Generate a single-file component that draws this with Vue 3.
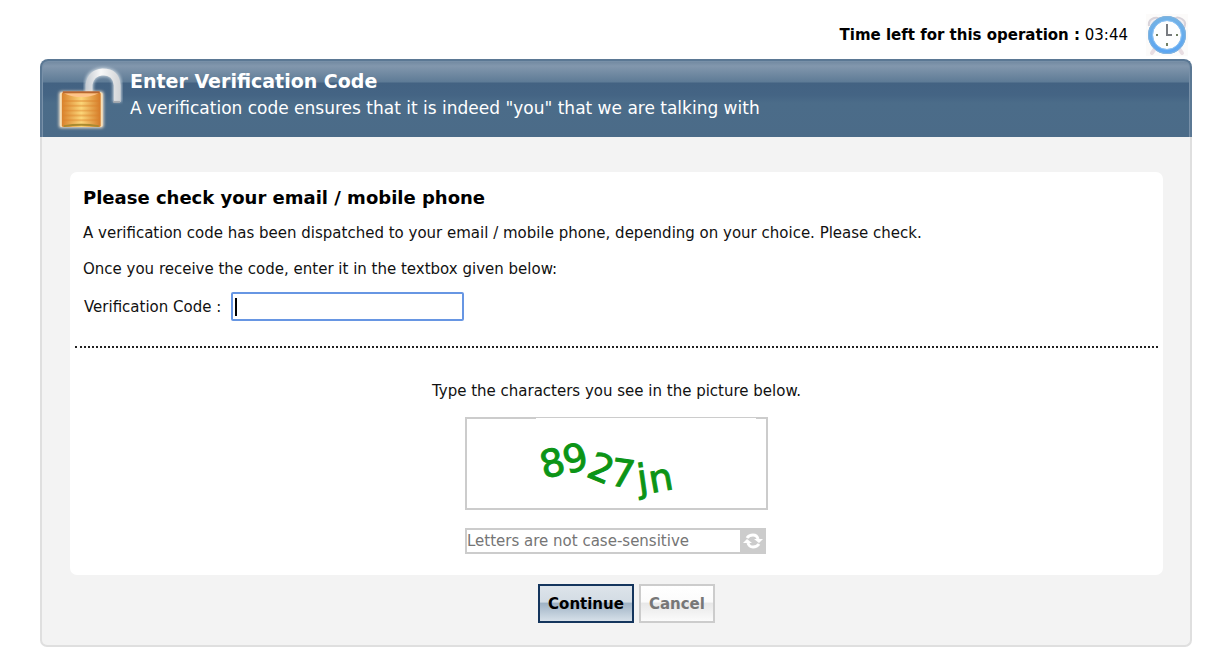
<script setup>
import { ref, onMounted } from 'vue'

const code = ref('')
const captcha = ref('')
const timeLeft = ref('03:44')
const codeInput = ref(null)

onMounted(() => codeInput.value.focus())
</script>

<template>
  <div class="page">
    <div class="timer">
      <span><strong>Time left for this operation :</strong> {{ timeLeft }}</span>
      <svg class="clock" viewBox="0 0 42 42" aria-hidden="true">
        <defs>
          <linearGradient id="rim" x1="0" y1="0" x2="0" y2="1">
            <stop offset="0" stop-color="#72b2e6" />
            <stop offset="1" stop-color="#5ca6f2" />
          </linearGradient>
        </defs>
        <rect width="42" height="42" fill="#fcfbfa" />
        <path d="M3 12Q2 6 8 4Q12 3 14 5M28 5Q31 2 36 5Q41 8 38 14" fill="#f1eef1" stroke="#d8d3da" stroke-width="2" />
        <path d="M8 36l-2 3M34 36l2 3" stroke="#e8dde2" stroke-width="4" stroke-linecap="round" />
        <circle cx="21" cy="21" r="16.500" fill="#fdfefe" stroke="url(#rim)" stroke-width="5" />
        <circle cx="21" cy="21" r="18.500" fill="none" stroke="#84b4dc" stroke-width="1" />
        <circle cx="21" cy="21" r="14.500" fill="none" stroke="#8fc4f4" stroke-width="1" />
        <path d="M21 10V21H26" fill="none" stroke="#777b80" stroke-width="2" />
        <path d="M21 29v3M10 21h2M30 21h2" stroke="#708064" stroke-width="2" />
      </svg>
    </div>

    <main class="card">
      <header class="banner">
        <svg class="lock" viewBox="0 0 70 68" aria-hidden="true">
          <defs>
            <linearGradient id="body" x1="0" x2="1">
              <stop offset="0" stop-color="#d9812c" />
              <stop offset="0.500" stop-color="#fbd578" />
              <stop offset="1" stop-color="#d47a28" />
            </linearGradient>
            <linearGradient id="steel" gradientUnits="userSpaceOnUse" x1="30" y1="0" x2="66" y2="0">
              <stop offset="0" stop-color="#c3c9d0" />
              <stop offset="0.450" stop-color="#f8f8f8" />
              <stop offset="1" stop-color="#d2d4d7" />
            </linearGradient>
            <filter id="glow" x="-20%" y="-20%" width="140%" height="140%">
              <feGaussianBlur stdDeviation="1.500" />
            </filter>
          </defs>
          <path d="M34 29V20Q35 8 48 7Q63 7 63 21V38" fill="none" stroke="#c4d0da" stroke-width="9" filter="url(#glow)" />
          <path d="M34 29V20Q36 8 48 7Q62 7 63 21V38" fill="none" stroke="url(#steel)" stroke-width="7" />
          <path d="M59 38h7" fill="none" stroke="#a7abb0" stroke-width="2" />
          <rect x="3" y="27" width="46" height="38" rx="3" fill="#efe2cf" filter="url(#glow)" />
          <rect x="4" y="28" width="44" height="36" rx="2" fill="#f7dfb6" />
          <rect x="6" y="28" width="40" height="36" rx="2" fill="url(#body)" />
          <path d="M7 37h38M7 42h38M7 47h38M7 52h38M7 57h38" stroke="#dc8129" stroke-width="2" opacity="0.400" />
          <path d="M8 29Q26 37 44 29Z" fill="#ffc489" />
          <path d="M7 28h38" stroke="#b86731" stroke-width="2" />
          <path d="M8 63Q26 60 44 63" fill="none" stroke="#a98a30" stroke-width="2" />
        </svg>
        <div class="heading">
          <h1>Enter Verification Code</h1>
          <p>A verification code ensures that it is indeed "you" that we are talking with</p>
        </div>
      </header>

      <form class="content" @submit.prevent>
        <section class="panel">
          <h2>Please check your email / mobile phone</h2>
          <p>A verification code has been dispatched to your email / mobile phone, depending on your choice. Please check.</p>
          <p>Once you receive the code, enter it in the textbox given below:</p>
          <div class="field">
            <label for="code">Verification Code :</label>
            <input id="code" ref="codeInput" v-model="code" type="text" placeholder=" " autocomplete="off" />
          </div>
          <hr />
          <div class="check">
            <label for="captcha">Type the characters you see in the picture below.</label>
            <div class="picture">
              <svg viewBox="0 0 220 88" role="img" aria-label="Characters to type">
                <rect width="220" height="88" fill="#fff" />
                <text x="8 31 49 73 103 115" y="61 56 58 67 74 75" rotate="-15 -15 22 8 -8 -10">8927jn</text>
              </svg>
            </div>
            <div class="entry">
              <input id="captcha" v-model="captcha" type="text" placeholder="Letters are not case-sensitive" autocomplete="off" />
              <button type="button" aria-label="Refresh picture">
                <svg viewBox="0 0 20 18" aria-hidden="true">
                  <path d="M4 6Q6 3 10 3Q14 3 15 7M16 12Q14 15 10 15Q6 15 5 11" fill="none" stroke="#fff" stroke-width="3" />
                  <path d="M11 7h9l-4 4zM0 11l4-4 5 4z" fill="#fff" />
                </svg>
              </button>
            </div>
          </div>
        </section>
        <div class="actions">
          <button class="primary" type="submit">Continue</button>
          <button class="secondary" type="button">Cancel</button>
        </div>
      </form>
    </main>
  </div>
</template>

<style>
body {
  margin: 0;
  background: #fff;
}
</style>

<style scoped>
.page {
  padding: 12px 19px 16px 40px;
  font-family: Verdana, "DejaVu Sans", sans-serif;
  font-size: 15px;
  line-height: 20px;
  color: #111;
}

.page * {
  box-sizing: border-box;
}

h1,
h2,
p {
  margin: 0;
}

input,
button {
  font: inherit;
}

.timer {
  display: flex;
  justify-content: flex-end;
  align-items: center;
  gap: 18px;
  height: 47px;
  padding: 0 4px 2px 0;
  color: #000;
}

.clock {
  width: 42px;
  height: 42px;
}

.banner {
  display: flex;
  gap: 6px;
  height: 78px;
  padding: 4px 14px;
  border: solid #5b7894;
  border-width: 2px 2px 0;
  border-radius: 8px 8px 0 0;
  box-shadow: inset 1px 1px 0 #7890a8, inset -1px 0 0 #7890a8;
  background: linear-gradient(#7088a0 0, #8297ad 5px, #5e7b96 21px, #436282 22px, #446484 34px, #4b6c89 42px, #4b6b88 100%);
  color: #fff;
}

.lock {
  flex: none;
  width: 68px;
  height: 66px;
}

.heading {
  padding-top: 4px;
}

.heading h1 {
  font-size: 19px;
  line-height: 24px;
}

.heading p {
  padding-top: 4px;
  font-size: 17px;
  line-height: 22px;
}

.content {
  padding: 35px 27px 22px 28px;
  border: 2px solid #dfdfdf;
  border-top: 0;
  border-radius: 0 0 7px 7px;
  background: #f3f3f3;
}

.panel {
  padding: 14px 5px 21px;
  border-radius: 7px;
  background: #fff;
}

.panel h2 {
  padding-left: 8px;
  font-size: 18px;
  line-height: 24px;
  color: #000;
}

.panel > p {
  padding: 13px 8px 3px;
}

.field {
  display: flex;
  align-items: center;
  gap: 10px;
  padding: 10px 9px 0;
}

.field input {
  width: 233px;
  height: 29px;
  padding: 2px 3px;
  border: 2px solid #6796e3;
  border-radius: 2px;
  outline: none;
  background: #fff;
}

/* Steady, thick caret while the focused box is empty */
.field input:focus:placeholder-shown {
  caret-color: transparent;
  background: linear-gradient(#000, #000) 2px center / 2px 18px no-repeat #fff;
}

hr {
  margin: 25px 0 0;
  border: 0;
  border-top: 2px dotted #222;
}

.check {
  display: flex;
  flex-direction: column;
  align-items: center;
  padding-top: 33px;
}

.picture {
  width: 303px;
  height: 93px;
  margin-top: 16px;
  border: 2px solid #ccc;
}

.picture svg {
  display: block;
  width: 220px;
  height: 88px;
  margin: -1px 0 0 69px;
  overflow: visible;
}

.picture text {
  font-family: Verdana, "DejaVu Sans", sans-serif;
  font-size: 38px;
  fill: #0c9416;
  stroke: #0c9416;
  stroke-width: 1px;
}

.entry {
  display: flex;
  width: 301px;
  height: 26px;
  margin: 18px 2px 0 0;
}

.entry input {
  flex: 1;
  min-width: 0;
  padding: 0;
  border: 2px solid #ccc;
  border-right: 0;
  outline: none;
  background: #fff;
}

.entry input::placeholder {
  color: #757575;
  opacity: 1;
}

.entry button {
  display: flex;
  justify-content: center;
  align-items: center;
  width: 26px;
  padding: 0;
  border: 0;
  background: #ccc;
}

.entry button svg {
  width: 20px;
  height: 18px;
}

.actions {
  display: flex;
  justify-content: center;
  gap: 5px;
  padding: 9px 0 0 20px;
}

.actions button {
  height: 39px;
  padding: 1px 8px 0;
  font-weight: bold;
}

.actions .primary {
  border: 2px solid #14355d;
  background: linear-gradient(#dde4ea 0, #d3dce4 45%, #a0b3c5 50%, #d6e0e9 100%);
  color: #000;
}

.actions .secondary {
  border: 2px solid #ccc;
  background: linear-gradient(#fff 0, #fbfbfb 45%, #e8e8e8 50%, #fbfbfb 100%);
  color: #777;
}
</style>
